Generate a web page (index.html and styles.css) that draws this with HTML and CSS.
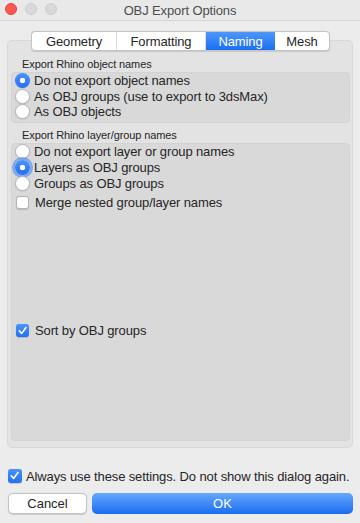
FILE: index.html
```html
<!DOCTYPE html>
<html lang="en">
<head>
    <meta charset="UTF-8">
    <meta name="viewport" content="width=device-width, initial-scale=1.0">
    <title>OBJ Export Options</title>
    <link rel="stylesheet" href="styles.css">
</head>
<body>
    <div class="window">
        <div class="titlebar">
            <div class="lights">
                <span class="light red"></span>
                <span class="light"></span>
                <span class="light"></span>
            </div>
            <div class="title">OBJ Export Options</div>
        </div>

        <div class="content">
            <div class="tabs">
                <span class="tab tab-geometry">Geometry</span>
                <span class="tab tab-formatting">Formatting</span>
                <span class="tab tab-naming active">Naming</span>
                <span class="tab tab-mesh">Mesh</span>
            </div>

            <div class="group">
                <div class="section-label">Export Rhino object names</div>
                <div class="section section-objects">
                    <div class="row"><span class="radio checked"></span>Do not export object names</div>
                    <div class="row"><span class="radio"></span>As OBJ groups (use to export to 3dsMax)</div>
                    <div class="row"><span class="radio"></span>As OBJ objects</div>
                </div>

                <div class="section-label second">Export Rhino layer/group names</div>
                <div class="section section-layers">
                    <div class="row row-wide"><span class="radio"></span>Do not export layer or group names</div>
                    <div class="row row-wide"><span class="radio checked focus"></span>Layers as OBJ groups</div>
                    <div class="row row-wide"><span class="radio"></span>Groups as OBJ groups</div>
                    <div class="row row-check merge"><span class="check"></span>Merge nested group/layer names</div>
                    <div class="row row-check sort"><span class="check on"></span>Sort by OBJ groups</div>
                </div>
            </div>

            <div class="row row-check always"><span class="check on"></span>Always use these settings. Do not show this dialog again.</div>

            <div class="buttons">
                <button class="btn cancel">Cancel</button>
                <button class="btn ok">OK</button>
            </div>
        </div>
    </div>
</body>
</html>
```

FILE: styles.css
```css
body {
    margin: 0;
    font-family: "Liberation Sans", Arial, sans-serif;
    font-size: 13px;
    letter-spacing: -0.12px;
    color: #262626;
    background: #ececec;
}

.window {
    width: 360px;
    height: 523px;
    background: #ececec;
}

.titlebar {
    height: 20px;
    position: relative;
    display: flex;
    align-items: center;
    justify-content: center;
    border-bottom: 1px solid #d6d6d6;
    background: #e9e9e9;
}

.lights {
    position: absolute;
    left: 5px;
    top: 3px;
    display: flex;
    gap: 8px;
}

.light {
    width: 12px;
    height: 12px;
    border-radius: 50%;
    background: #d9d9d9;
    border: 0.5px solid #cccccc;
    box-sizing: border-box;
}

.light.red {
    background: #fc5753;
    border-color: #e0443e;
}

.title {
    color: #4d4d4d;
    font-size: 13px;
    padding-top: 1px;
}

.content {
    padding: 10px 7px 0 7px;
}

.tabs {
    position: relative;
    z-index: 1;
    display: flex;
    box-sizing: border-box;
    width: 299px;
    height: 20px;
    margin-left: 24px;
    background: #fff;
    border: 0.5px solid #c4c4c4;
    border-radius: 4px;
    box-shadow: 0 0.5px 1px rgba(0, 0, 0, 0.12);
    overflow: hidden;
}

.tab {
    display: flex;
    align-items: center;
    justify-content: center;
    border-right: 1px solid #dcdcdc;
    font-size: 13px;
    color: #262626;
}

.tab-geometry { width: 84px; }
.tab-formatting { width: 88px; }
.tab-naming { width: 69px; }
.tab-mesh { flex: 1; border-right: none; }

.tab.active {
    background: linear-gradient(#4d97fb, #1c6ff3);
    color: #fff;
    border-right: none;
}

.group {
    margin-top: -11px;
    background: #e3e3e3;
    border: 1px solid #d8d8d8;
    border-radius: 5px;
    padding: 15px 2px 6px 3px;
}

.section-label {
    font-size: 11px;
    letter-spacing: -0.1px;
    color: #262626;
    height: 16px;
    line-height: 16px;
    padding-left: 11px;
}

.section-label.second {
    height: 15px;
    line-height: 15px;
    margin-top: 5px;
}

.section {
    background: #d9d9d9;
    border-radius: 4px;
    border: 1px solid #d3d3d3;
    padding: 0 0 0 3px;
}

.section-objects {
    padding-bottom: 2.5px;
}

.section-layers {
    height: 296px;
}

.row {
    display: flex;
    align-items: center;
    height: 15.5px;
    font-size: 13px;
    white-space: nowrap;
}

.row-wide {
    height: 15.67px;
}

.radio {
    width: 15px;
    height: 15px;
    margin-right: 4px;
    border-radius: 50%;
    background: #fff;
    border: 0.5px solid #b5b5b5;
    box-sizing: border-box;
    box-shadow: 0 0.5px 1px rgba(0, 0, 0, 0.15);
    flex-shrink: 0;
}

.radio.checked {
    border: none;
    background: radial-gradient(circle, #fff 0 2.5px, transparent 3px), linear-gradient(#4a94fa, #2270f3);
}

.radio.focus {
    box-shadow: 0 0 0 3px rgba(60, 130, 246, 0.55);
}

.check {
    width: 13px;
    height: 13px;
    margin: 0 6px 0 1px;
    background: #fff;
    border: 0.5px solid #b5b5b5;
    border-radius: 3px;
    box-sizing: border-box;
    box-shadow: 0 0.5px 1px rgba(0, 0, 0, 0.15);
    flex-shrink: 0;
}

.check.on {
    border: none;
    background-image: url("data:image/svg+xml;utf8,<svg xmlns='http://www.w3.org/2000/svg' width='13' height='13'><path d='M3.2 6.8 L5.6 9.4 L10 3.6' fill='none' stroke='white' stroke-width='1.6' stroke-linecap='round' stroke-linejoin='round'/></svg>"), linear-gradient(#4a94fa, #2270f3);
}

.row-check {
    height: 16px;
}

.merge {
    margin-top: 4px;
}

.sort {
    margin-top: 112px;
}

.always {
    margin-top: 20px;
    margin-left: 1px;
}

.always .check {
    width: 14px;
    height: 14px;
    margin: 0 4px 0 0;
}

.buttons {
    display: flex;
    gap: 5px;
    margin: 9px 0 0 1px;
}

.btn {
    height: 21px;
    border-radius: 5px;
    font-family: "Liberation Sans", Arial, sans-serif;
    font-size: 13px;
    padding: 0;
}

.cancel {
    width: 79px;
    background: #fff;
    color: #262626;
    border: 0.5px solid #c4c4c4;
    box-shadow: 0 0.5px 1px rgba(0, 0, 0, 0.15);
}

.ok {
    flex: 1;
    background: linear-gradient(#66a8fb, #1a6cf2);
    color: #fff;
    border: none;
}
```
